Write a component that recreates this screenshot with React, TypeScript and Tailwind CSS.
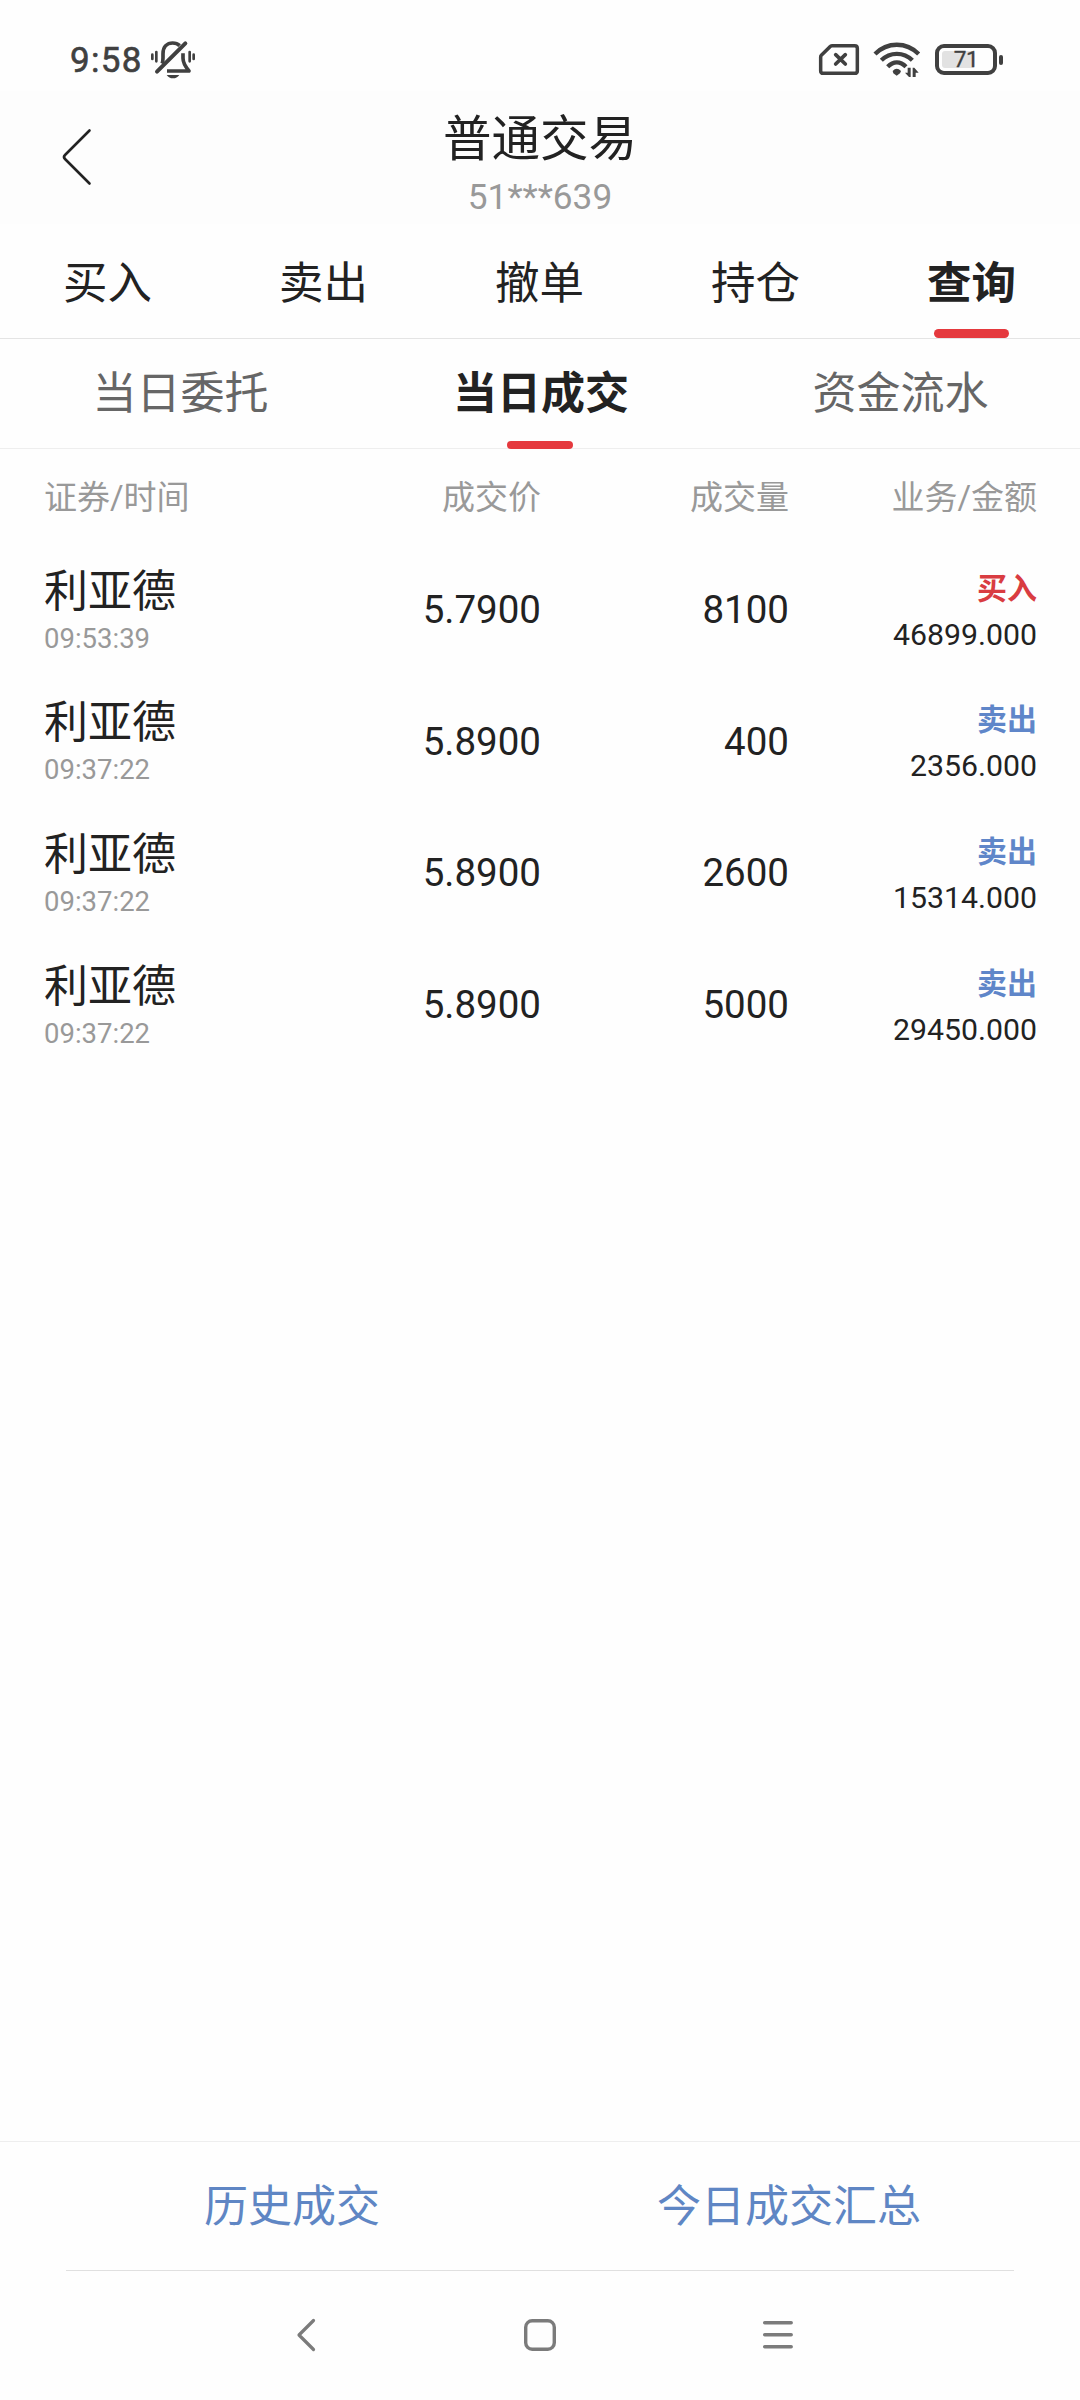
/**
 * Pantalla "普通交易": consulta de las operaciones ejecutadas en el día.
 */

interface Operacion {
  nombre: string;
  hora: string;
  precio: string;
  cantidad: string;
  tipo: "买入" | "卖出";
  importe: string;
}

const PESTANAS = ["买入", "卖出", "撤单", "持仓", "查询"];
const SUBPESTANAS = ["当日委托", "当日成交", "资金流水"];

const OPERACIONES: Operacion[] = [
  { nombre: "利亚德", hora: "09:53:39", precio: "5.7900", cantidad: "8100", tipo: "买入", importe: "46899.000" },
  { nombre: "利亚德", hora: "09:37:22", precio: "5.8900", cantidad: "400", tipo: "卖出", importe: "2356.000" },
  { nombre: "利亚德", hora: "09:37:22", precio: "5.8900", cantidad: "2600", tipo: "卖出", importe: "15314.000" },
  { nombre: "利亚德", hora: "09:37:22", precio: "5.8900", cantidad: "5000", tipo: "卖出", importe: "29450.000" },
];

/** Mismas columnas para la cabecera y las filas. */
const COLUMNAS = "grid grid-cols-[297px_200px_248px_248px] pl-11";

function CampanaSilencio() {
  return (
    <svg className="h-10 w-[46px]" viewBox="300 60 138 120" fill="none" stroke="#404040" strokeLinecap="round">
      <path d="M307 104v13M319 96v28" strokeWidth="8" />
      <path d="M431 104v13M419 96v28" strokeWidth="8" />
      <path d="M336 131c3-5 3-10 3-18v-12c0-20 12-32 29-32 9 0 16 3 21 8" strokeWidth="11" strokeLinecap="butt" />
      <path d="M399 100v15c0 15 7 25 18 38h-66" strokeWidth="11" strokeLinecap="butt" strokeLinejoin="round" />
      <path d="M321 155l85-85" strokeWidth="12" />
      <path d="M350 165h38c-5 7-11 10-19 10s-14-3-19-10z" fill="#404040" stroke="none" />
    </svg>
  );
}

function SinSim() {
  return (
    <svg className="h-[33px] w-[42px]" viewBox="54 72 126 99" fill="none" stroke="#404040" strokeLinejoin="round">
      <path
        d="M96 80h68q8 0 8 8v67q0 8-8 8H70q-8 0-8-8v-41q0-3 2-5l26-26q2-3 6-3z"
        strokeWidth="10.5"
      />
      <path d="M107 107l29 28M136 107l-29 28" strokeWidth="11" strokeLinecap="round" />
    </svg>
  );
}

function Wifi() {
  return (
    <svg className="h-[38px] w-12" viewBox="219 63 144 114" fill="none" stroke="#404040">
      <path d="M225 102C262 65 319 65 356 102" strokeWidth="13" />
      <path d="M244 121C270 95 311 95 337 121" strokeWidth="13" />
      <path d="M263 140C280 123 301 123 318 140" strokeWidth="13" />
      <path d="M278 153q12-13 25 0l-3 7-10 7-10-7z" fill="#404040" stroke="none" />
      <path d="M332 143v28h-5l-12-13h8v-15z M338 171v-28h5l13 15h-9v13z" fill="#404040" stroke="none" />
    </svg>
  );
}

function Bateria() {
  return (
    <div className="flex items-center gap-[2px]">
      <div className="relative flex h-[31px] w-[62px] items-center justify-center rounded-[9px] border-4 border-[#404040]">
        <div className="absolute top-[3px] left-[3px] h-[17px] w-[33px] rounded-[3px] bg-[#e2e2e2]" />
        <span className="relative text-[22.5px] leading-none tracking-[-0.5px] text-[#404040] [-webkit-text-stroke:0.3px_#404040]">
          71
        </span>
      </div>
      <div className="h-[10px] w-1 rounded-full bg-[#404040]" />
    </div>
  );
}

function BarraEstado() {
  return (
    <div className="flex h-[91px] items-center justify-between pt-[30px] pr-[77px] pb-[2px] pl-[70px]">
      <div className="flex items-center gap-[7px]">
        <span className="pt-[2px] text-[35px] leading-none tracking-[1.3px] text-[#404040] [-webkit-text-stroke:0.6px_#404040]">
          9:58
        </span>
        <CampanaSilencio />
      </div>
      <div className="flex items-center">
        <SinSim />
        <div className="pr-[14px] pl-[13px]">
          <Wifi />
        </div>
        <Bateria />
      </div>
    </div>
  );
}

function Cabecera() {
  return (
    <header className="grid h-[133px] grid-cols-[200px_1fr_200px] bg-[#fdfdfd]">
      <svg
        className="mt-9 ml-[61px] h-[60px] w-8"
        viewBox="0 0 32 60"
        fill="none"
        stroke="#222"
        strokeWidth="2.6"
        strokeLinecap="round"
      >
        <path d="M28.5 3.5L4 28q-2 2 0 4L28.5 56.5" />
      </svg>
      <div className="flex flex-col items-center">
        <h1 className="mt-[19px] text-[48.5px] leading-[60px] text-[#222]">普通交易</h1>
        <span className="mt-[7px] text-[35.2px] leading-[40px] text-[#999]">51***639</span>
      </div>
    </header>
  );
}

function Pestanas({ activa }: { activa: string }) {
  return (
    <nav className="grid h-[115px] grid-cols-5 border-b border-[#e4e4e4]">
      {PESTANAS.map((p) => (
        <div key={p} className="flex flex-col items-center pr-px text-[44.5px] text-[#222]">
          <span className={p === activa ? "h-[105px] leading-[120px] font-bold" : "h-[105px] leading-[120px]"}>{p}</span>
          {p === activa && <div className="h-[9px] w-[75px] shrink-0 rounded-full bg-[#e5393e]" />}
        </div>
      ))}
    </nav>
  );
}

function Subpestanas({ activa }: { activa: string }) {
  return (
    <nav className="grid h-[110px] grid-cols-3 border-b border-[#eee]">
      {SUBPESTANAS.map((p) => (
        <div key={p} className="flex flex-col items-center text-[44px]">
          <span
            className={
              p === activa
                ? "h-[102px] pl-[2px] leading-[111px] font-bold text-[#222]"
                : "h-[102px] pl-px leading-[111px] text-[#666]"
            }
          >
            {p}
          </span>
          {p === activa && <div className="h-2 w-[66px] shrink-0 rounded-full bg-[#e5393e]" />}
        </div>
      ))}
    </nav>
  );
}

function Fila({ op }: { op: Operacion }) {
  return (
    <li className={`${COLUMNAS} h-[131.6px] items-center text-[#222]`}>
      <div className="flex flex-col">
        <span className="text-[44px] leading-[50px]">{op.nombre}</span>
        <span className="mt-[6px] text-[27.5px] leading-[32px] text-[#999]">{op.hora}</span>
      </div>
      <span className="pb-px text-right text-[38.5px] leading-none">{op.precio}</span>
      <span className="pb-px text-right text-[38.5px] leading-none">{op.cantidad}</span>
      <div className="flex flex-col items-end pt-[2px]">
        <span
          className={
            op.tipo === "买入"
              ? "text-[30px] leading-[40px] font-bold text-[#d93c41]"
              : "text-[30px] leading-[40px] font-bold text-[#5f86c9]"
          }
        >
          {op.tipo}
        </span>
        <span className="mt-[6px] text-[30.25px] leading-[40px]">{op.importe}</span>
      </div>
    </li>
  );
}

function BarraNavegacion() {
  return (
    <div className="flex h-[129px] items-start pt-[46px] pl-[294px]">
      <svg className="h-9 w-6" viewBox="0 0 24 36" fill="none" stroke="#7b7b7b" strokeWidth="3.2" strokeLinecap="round">
        <path d="M19.5 3.5L5 18l14.5 14.5" strokeLinejoin="round" />
      </svg>
      <svg className="ml-[204px] h-9 w-9" viewBox="0 0 36 36" fill="none" stroke="#7b7b7b" strokeWidth="3.4">
        <rect x="3.7" y="3.7" width="28.6" height="28.6" rx="6.5" />
      </svg>
      <svg className="ml-[203px] h-9 w-9" viewBox="0 0 36 36" stroke="#7b7b7b" strokeWidth="3.5" strokeLinecap="round">
        <path d="M3.7 5.7h26.5M3.7 17.8h26.5M3.7 29.8h26.5" />
      </svg>
    </div>
  );
}

export default function App() {
  return (
    <div className="flex h-[2400px] w-[1080px] flex-col overflow-hidden bg-[#fefefe] font-[Roboto,'Noto_Sans_CJK_SC',sans-serif]">
      <BarraEstado />
      <Cabecera />
      <Pestanas activa="查询" />
      <Subpestanas activa="当日成交" />

      <main className="flex-1">
        <div className={`${COLUMNAS} h-24 items-center text-[33px] leading-none text-[#999]`}>
          <span>证券/时间</span>
          <span className="text-right">成交价</span>
          <span className="text-right">成交量</span>
          <span className="text-right">业务/金额</span>
        </div>
        <ul>
          {OPERACIONES.map((op, i) => (
            <Fila key={i} op={op} />
          ))}
        </ul>
      </main>

      <footer>
        <div className="flex h-[129px] items-center gap-[277px] border-t border-[#eee] pt-[2px] pl-[204px] text-[44px] leading-none text-[#5f86c4]">
          <span>历史成交</span>
          <span>今日成交汇总</span>
        </div>
        <div className="mx-[66px] h-px bg-[#e0e0e0]" />
        <BarraNavegacion />
      </footer>
    </div>
  );
}
